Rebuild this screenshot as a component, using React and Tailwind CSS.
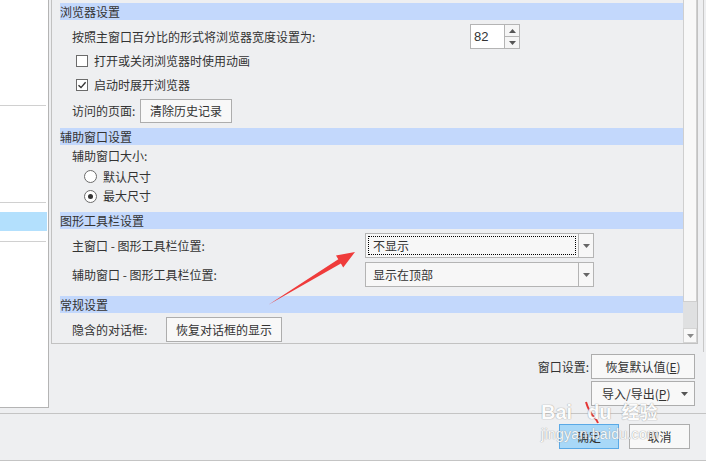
import React from "react";

const Header = ({ children, className = "" }) => (
  <div className={`ml-[8px] h-[17px] bg-[#c3d8fc] pl-[0px] text-[12px] leading-[17px] text-[#333] ${className}`}>
    {children}
  </div>
);

const Btn = ({ children, className = "" }) => (
  <div
    className={`flex items-center justify-center border border-[#adadad] bg-[#f8f8f8] text-[12px] text-[#333] ${className}`}
  >
    {children}
  </div>
);

const Checkbox = ({ checked, label }) => (
  <div className="flex h-[24px] items-center pl-[24px]">
    <div className="flex h-[12px] w-[12px] items-center justify-center border border-[#6b6b6b] bg-white">
      {checked && (
        <svg width="10" height="10" viewBox="0 0 10 10">
          <path d="M1.5 5.2 L4 7.6 L8.6 2.2" fill="none" stroke="#333" strokeWidth="1.4" />
        </svg>
      )}
    </div>
    <span className="ml-[6px] text-[12px] text-[#333]">{label}</span>
  </div>
);

const Radio = ({ checked, label, h }) => (
  <div className={`flex ${h} items-center pl-[32px]`}>
    <div className="flex h-[13px] w-[13px] items-center justify-center rounded-full border border-[#6b6b6b] bg-white">
      {checked && <div className="h-[5px] w-[5px] rounded-full bg-[#333]" />}
    </div>
    <span className="ml-[6px] text-[12px] text-[#333]">{label}</span>
  </div>
);

const Combo = ({ value, focused }) => (
  <div className="flex h-[25px] w-[229px] border border-[#b4b4b4] bg-[#f7f7f7]">
    <div className="flex flex-1 items-center p-[2px]">
      <div
        className={`flex h-full w-full items-center pl-[4px] text-[12px] text-[#333] ${
          focused ? "border border-dotted border-black" : "border border-transparent"
        }`}
      >
        {value}
      </div>
    </div>
    <div className="flex w-[15px] items-center justify-center border-l border-[#b4b4b4]">
      <svg width="7" height="4" viewBox="0 0 7 4">
        <path d="M0 0 L7 0 L3.5 4 Z" fill="#666" />
      </svg>
    </div>
  </div>
);

export default function App() {
  return (
    <div className="relative h-[461px] w-[706px] overflow-hidden bg-[#eeeff1] font-['Noto_Sans_CJK_SC',sans-serif]">
      {/* top area */}
      <div className="flex h-[413px]">
        {/* left tree panel */}
        <div className="flex h-[408px] w-[49px] flex-col border-r border-b border-[#b4b4b4] bg-white">
          <div className="h-[105px]" />
          <div className="h-px w-[46px] bg-[#d0d0d0]" />
          <div className="h-[96px]" />
          <div className="h-px w-[46px] bg-[#d0d0d0]" />
          <div className="mt-[9px] h-[19px] w-[47px] bg-[#b3e0fd]" />
          <div className="mt-[10px] h-px w-[46px] bg-[#d0d0d0]" />
        </div>

        <div className="ml-[2px] flex w-[647px] flex-col">
          {/* settings box */}
          <div className="flex h-[344px] border-x border-b border-[#c2c2c2] bg-[#eeeff1]">
            <div className="flex flex-1 flex-col pt-[3px]">
              <Header>浏览器设置</Header>

              <div className="mt-[4px] flex h-[25px] items-center pl-[20px]">
                <span className="w-[398px] text-[12px] text-[#333]">按照主窗口百分比的形式将浏览器宽度设置为:</span>
                <div className="flex h-[25px] w-[50px] border border-[#b4b4b4] bg-white">
                  <div className="flex flex-1 items-center pl-[3px] font-['Liberation_Sans',sans-serif] text-[13px] text-[#333]">
                    82
                  </div>
                  <div className="flex w-[15px] flex-col border-l border-[#b4b4b4]">
                    <div className="flex flex-1 items-center justify-center border-b border-[#b4b4b4] bg-[#f5f5f5]">
                      <svg width="7" height="4" viewBox="0 0 7 4">
                        <path d="M0 4 L7 4 L3.5 0 Z" fill="#555" />
                      </svg>
                    </div>
                    <div className="flex flex-1 items-center justify-center bg-[#f5f5f5]">
                      <svg width="7" height="4" viewBox="0 0 7 4">
                        <path d="M0 0 L7 0 L3.5 4 Z" fill="#555" />
                      </svg>
                    </div>
                  </div>
                </div>
              </div>

              <Checkbox label="打开或关闭浏览器时使用动画" />
              <Checkbox checked label="启动时展开浏览器" />

              <div className="mt-[2px] flex h-[24px] items-center pl-[20px]">
                <span className="w-[68px] text-[12px] text-[#333]">访问的页面:</span>
                <Btn className="h-[24px] w-[92px]">清除历史记录</Btn>
              </div>

              <Header className="mt-[5px]">辅助窗口设置</Header>
              <div className="flex h-[22px] items-center pl-[20px] text-[12px] text-[#333]">辅助窗口大小:</div>
              <Radio label="默认尺寸" h="h-[19px]" />
              <Radio checked label="最大尺寸" h="h-[20px]" />

              <Header className="mt-[6px]">图形工具栏设置</Header>
              <div className="mt-[4px] flex h-[25px] items-center pl-[20px]">
                <span className="w-[293px] text-[12px] text-[#333]">主窗口 - 图形工具栏位置:</span>
                <Combo value="不显示" focused />
              </div>
              <div className="mt-[4px] flex h-[25px] items-center pl-[20px]">
                <span className="w-[293px] text-[12px] text-[#333]">辅助窗口 - 图形工具栏位置:</span>
                <Combo value="显示在顶部" />
              </div>

              <Header className="mt-[9px]">常规设置</Header>
              <div className="mt-[4px] flex h-[25px] items-center pl-[20px]">
                <span className="w-[94px] text-[12px] text-[#333]">隐含的对话框:</span>
                <Btn className="h-[25px] w-[116px]">恢复对话框的显示</Btn>
              </div>
            </div>

            {/* scrollbar */}
            <div className="flex w-[14px] flex-col">
              <div className="h-[302px] border-x border-b border-[#cfcfcf] bg-[#f8f8f8]" />
              <div className="flex-1 bg-[#dfe0e1]" />
              <div className="flex h-[15px] items-center justify-center border border-[#d4d4d4] bg-[#f8f8f8]">
                <svg width="7" height="4" viewBox="0 0 7 4">
                  <path d="M0 0 L7 0 L3.5 4 Z" fill="#8a8a8a" />
                </svg>
              </div>
            </div>
          </div>

          {/* window settings */}
          <div className="mt-[10px] flex items-center justify-end pr-[3px]">
            <span className="mr-[2px] text-[12px] text-[#333]">窗口设置:</span>
            <Btn className="h-[25px] w-[104px]">
              恢复默认值(<span className="underline">E</span>)
            </Btn>
          </div>
          <div className="mt-[2px] flex justify-end pr-[3px]">
            <div className="flex h-[25px] w-[104px] items-center border border-[#adadad] bg-[#f8f8f8] pl-[10px] pr-[6px] text-[12px] text-[#333]">
              <span className="flex-1">
                导入/导出(<span className="underline">P</span>)
              </span>
              <svg width="7" height="4" viewBox="0 0 7 4">
                <path d="M0 0 L7 0 L3.5 4 Z" fill="#555" />
              </svg>
            </div>
          </div>
        </div>

        <div className="ml-[5px] h-[352px] w-px bg-[#c8c8c8]" />
      </div>

      {/* bottom buttons */}
      <div className="flex h-[48px] justify-end gap-[10px] border-y border-[#c4c4c4] pt-[10px] pr-[16px]">
        <div className="flex h-[25px] w-[60px] items-center justify-center border border-[#5aa9e6] bg-[#a8d8f8] text-[12px] text-[#333]">
          确定
        </div>
        <Btn className="h-[25px] w-[61px]">取消</Btn>
      </div>

      {/* annotation arrow */}
      <svg className="pointer-events-none absolute left-0 top-0" width="706" height="461">
        <polygon
          points="268,305 338.3,259.3 336,255.4 355,252 343.2,267.4 340.9,263.5"
          fill="#ef3b3b"
        />
        <path d="M586 402 Q589 412 594 417 Q597 420 598 423" fill="none" stroke="#e53535" strokeWidth="2" />
      </svg>

      {/* watermark */}
      <div className="pointer-events-none absolute left-[541px] top-[400px] flex flex-col font-['Liberation_Sans',sans-serif] text-white opacity-85 [text-shadow:0_0_1px_#999,0_0_1px_#999]">
        <div className="flex items-baseline text-[20px] font-bold leading-[22px]">
          <span>Bai</span>
          <span className="ml-[15px]">du</span>
          <span className="ml-[10px] font-['Noto_Sans_CJK_SC',sans-serif] text-[18px]">经验</span>
        </div>
        <div className="mt-[3px] text-[14px] leading-[17px] tracking-[0.3px]">jingyan.baidu.com</div>
      </div>
    </div>
  );
}
